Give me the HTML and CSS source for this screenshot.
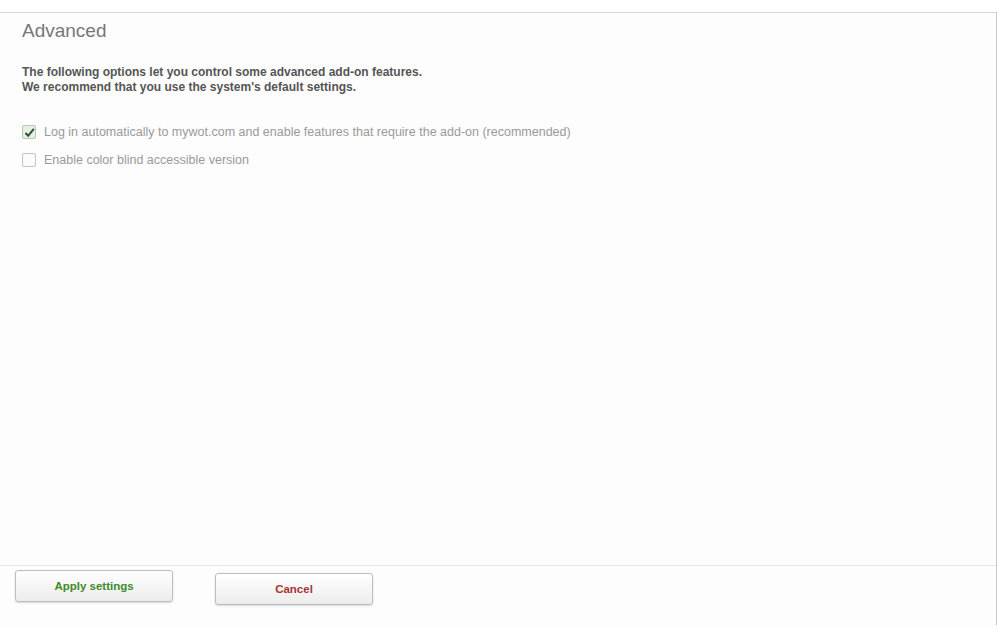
FILE: index.html
```html
<!DOCTYPE html>
<html lang="en">
<head>
    <meta charset="UTF-8">
    <title>Advanced</title>
    <link rel="stylesheet" href="styles.css">
</head>
<body>
    <div class="panel">
        <div class="content">
            <h1>Advanced</h1>
            <p class="intro">
                The following options let you control some advanced add-on features.<br>
                We recommend that you use the system's default settings.
            </p>

            <label class="option">
                <input type="checkbox" checked>
                <span class="box checked">
                    <svg width="11" height="11" viewBox="0 0 11 11"><path d="M1.5 6 L4.2 8.8 L9.8 1.8" fill="none" stroke="#2f4f35" stroke-width="2"/></svg>
                </span>
                <span class="text">Log in automatically to mywot.com and enable features that require the add-on (recommended)</span>
            </label>
            <label class="option">
                <input type="checkbox">
                <span class="box"></span>
                <span class="text">Enable color blind accessible version</span>
            </label>
        </div>

        <div class="footer">
            <button class="btn apply">Apply settings</button>
            <button class="btn cancel">Cancel</button>
        </div>
    </div>
</body>
</html>
```

FILE: styles.css
```css
body {
    margin: 0;
    background-color: #fff;
    font-family: 'Liberation Sans', Arial, sans-serif;
}

.panel {
    margin-top: 12px;
    width: 996px;
    height: 612px;
    border-top: 1px solid #d6d6d6;
    border-right: 1px solid #c8c8c8;
    display: flex;
    flex-direction: column;
    background-color: #fdfdfd;
}

.content {
    flex: 1;
    padding: 6px 0 0 22px;
}

h1 {
    margin: 0;
    font-size: 19px;
    font-weight: normal;
    line-height: 24px;
    color: #777;
}

.intro {
    margin: 22px 0 23px 0;
    font-size: 12px;
    font-weight: bold;
    line-height: 15px;
    color: #555;
}

.option {
    display: flex;
    align-items: center;
    gap: 8px;
    height: 28px;
}

.option input {
    display: none;
}

.box {
    width: 12px;
    height: 12px;
    border: 1px solid #c4c4c4;
    border-radius: 2px;
    background-color: #fafafa;
    display: flex;
    align-items: center;
    justify-content: center;
}

.box.checked {
    background-color: #e3efe3;
    border-color: #b9c9b9;
}

.text {
    font-size: 12.5px;
    color: #9a9a9a;
}

.footer {
    border-top: 1px solid #e6e6e6;
    padding: 4px 0 0 15px;
    height: 55px;
    display: flex;
    gap: 42px;
}

.btn {
    width: 158px;
    height: 32px;
    border: 1px solid #bdbdbd;
    border-radius: 3px;
    background: linear-gradient(#ffffff, #ececec);
    box-shadow: 0 1px 2px rgba(0, 0, 0, 0.15);
    font-family: 'Liberation Sans', Arial, sans-serif;
    font-size: 11.5px;
    font-weight: bold;
}

.apply {
    color: #3d8b2c;
}

.cancel {
    margin-top: 3px;
    color: #a83232;
}
```
